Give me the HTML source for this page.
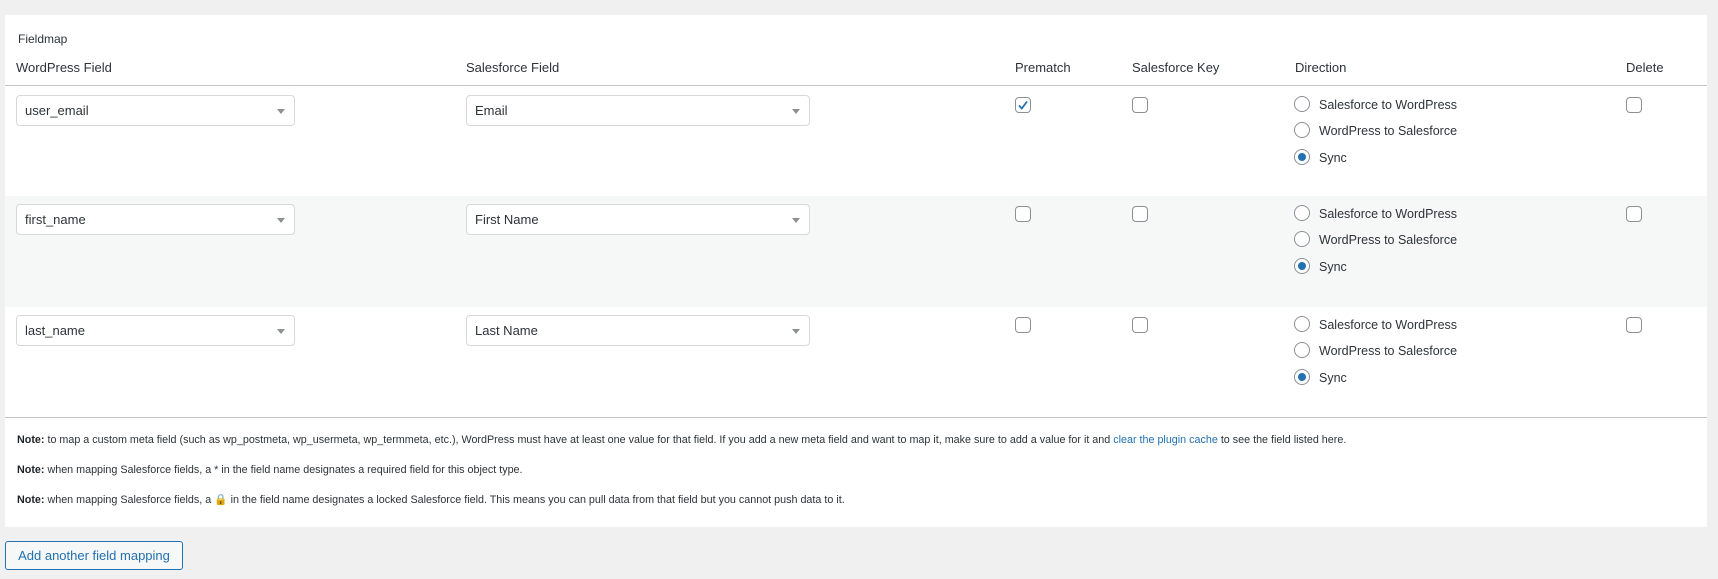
<!DOCTYPE html>
<html><head><meta charset="utf-8"><style>
*{box-sizing:border-box;margin:0;padding:0}
body{width:1718px;height:579px;background:#f0f0f1;font-family:"Liberation Sans",sans-serif;color:#2c3338;position:relative;overflow:hidden}
.abs{position:absolute;white-space:nowrap}
#panel{position:absolute;left:5px;top:15px;width:1702px;height:512px;background:#fff}
.h{font-size:13px;color:#2c3338}
.sel{position:absolute;height:31px;border:1px solid #d6d8da;border-radius:4px;background:#fff;font-size:13px;padding:0 8px;line-height:29px;color:#2c3338}
.sel:after{content:"";position:absolute;right:9px;top:13px;border-left:4px solid transparent;border-right:4px solid transparent;border-top:5px solid #8c8f94}
.cb{position:absolute;width:16px;height:16px;border:1px solid #8c8f94;border-radius:4px;background:#fff}
.rd{position:absolute;width:16px;height:16px;border:1px solid #8c8f94;border-radius:50%;background:#fff}
.rd.on:after{content:"";position:absolute;left:3px;top:3px;width:8px;height:8px;border-radius:50%;background:#2271b1}
.lb{position:absolute;font-size:12.5px;color:#2c3338;white-space:nowrap}
.note{position:absolute;left:17px;font-size:10.75px;color:#2c3338;white-space:nowrap}
.note b{font-weight:bold;color:#1d2327}
a{color:#2271b1;text-decoration:none}
</style></head><body>
<div id="panel"></div>
<div class="abs" style="left:18px;top:32px;font-size:12px">Fieldmap</div>
<div class="abs h" style="left:16px;top:60px">WordPress Field</div>
<div class="abs h" style="left:466px;top:60px">Salesforce Field</div>
<div class="abs h" style="left:1015px;top:60px">Prematch</div>
<div class="abs h" style="left:1132px;top:60px">Salesforce Key</div>
<div class="abs h" style="left:1295px;top:60px">Direction</div>
<div class="abs h" style="left:1626px;top:60px">Delete</div>
<div style="position:absolute;left:5px;top:85px;width:1702px;height:1px;background:#c3c4c7"></div>
<div style="position:absolute;left:5px;top:196px;width:1702px;height:111px;background:#f6f7f7"></div>
<div style="position:absolute;left:5px;top:417px;width:1702px;height:1px;background:#c3c4c7"></div>

<!-- row1 -->
<div class="sel" style="left:16px;top:95px;width:279px">user_email</div>
<div class="sel" style="left:466px;top:95px;width:344px">Email</div>
<div class="cb" style="left:1015px;top:97px"><svg width="14" height="14" viewBox="0 0 14 14" style="position:absolute;left:0;top:0"><path d="M3 7.5l2.8 3L11 3.5" fill="none" stroke="#2271b1" stroke-width="1.8"/></svg></div>
<div class="cb" style="left:1132px;top:97px"></div>
<div class="cb" style="left:1626px;top:97px"></div>
<div class="rd" style="left:1294px;top:96px"></div><div class="lb" style="left:1319px;top:98px">Salesforce to WordPress</div>
<div class="rd" style="left:1294px;top:122px"></div><div class="lb" style="left:1319px;top:124px">WordPress to Salesforce</div>
<div class="rd on" style="left:1294px;top:149px"></div><div class="lb" style="left:1319px;top:151px">Sync</div>

<!-- row2 -->
<div class="sel" style="left:16px;top:204px;width:279px">first_name</div>
<div class="sel" style="left:466px;top:204px;width:344px">First Name</div>
<div class="cb" style="left:1015px;top:206px"></div>
<div class="cb" style="left:1132px;top:206px"></div>
<div class="cb" style="left:1626px;top:206px"></div>
<div class="rd" style="left:1294px;top:205px"></div><div class="lb" style="left:1319px;top:207px">Salesforce to WordPress</div>
<div class="rd" style="left:1294px;top:231px"></div><div class="lb" style="left:1319px;top:233px">WordPress to Salesforce</div>
<div class="rd on" style="left:1294px;top:258px"></div><div class="lb" style="left:1319px;top:260px">Sync</div>

<!-- row3 -->
<div class="sel" style="left:16px;top:315px;width:279px">last_name</div>
<div class="sel" style="left:466px;top:315px;width:344px">Last Name</div>
<div class="cb" style="left:1015px;top:317px"></div>
<div class="cb" style="left:1132px;top:317px"></div>
<div class="cb" style="left:1626px;top:317px"></div>
<div class="rd" style="left:1294px;top:316px"></div><div class="lb" style="left:1319px;top:318px">Salesforce to WordPress</div>
<div class="rd" style="left:1294px;top:342px"></div><div class="lb" style="left:1319px;top:344px">WordPress to Salesforce</div>
<div class="rd on" style="left:1294px;top:369px"></div><div class="lb" style="left:1319px;top:371px">Sync</div>

<div class="note" style="top:434px"><b>Note:</b> to map a custom meta field (such as wp_postmeta, wp_usermeta, wp_termmeta, etc.), WordPress must have at least one value for that field. If you add a new meta field and want to map it, make sure to add a value for it and <a>clear the plugin cache</a> to see the field listed here.</div>
<div class="note" style="top:464px"><b>Note:</b> when mapping Salesforce fields, a * in the field name designates a required field for this object type.</div>
<div class="note" style="top:493px"><b>Note:</b> when mapping Salesforce fields, a <span style="color:#f0a830">&#128274;</span> in the field name designates a locked Salesforce field. This means you can pull data from that field but you cannot push data to it.</div>

<div style="position:absolute;left:5px;top:541px;width:178px;height:29px;border:1px solid #2271b1;border-radius:3px;background:#f6f7f7;color:#2271b1;font-size:13px;line-height:27px;text-align:center">Add another field mapping</div>
</body></html>
